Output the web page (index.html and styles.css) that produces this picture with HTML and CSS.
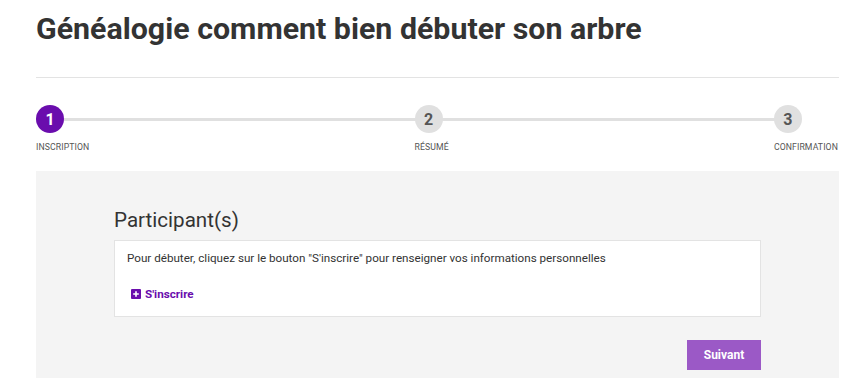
FILE: index.html
```html
<!DOCTYPE html>
<html lang="fr">
<head>
    <meta charset="UTF-8">
    <title>Généalogie comment bien débuter son arbre</title>
    <link rel="stylesheet" href="styles.css">
</head>
<body>
    <div class="page">
        <h1 class="title">Généalogie comment bien débuter son arbre</h1>

        <!-- Stepper -->
        <div class="stepper">
            <div class="step active">
                <span class="step-num">1</span>
                <span class="step-label">INSCRIPTION</span>
            </div>
            <div class="step">
                <span class="step-num">2</span>
                <span class="step-label">RÉSUMÉ</span>
            </div>
            <div class="step">
                <span class="step-num">3</span>
                <span class="step-label">CONFIRMATION</span>
            </div>
        </div>

        <!-- Participants -->
        <div class="panel">
            <div class="panel-inner">
                <h2 class="panel-title">Participant(s)</h2>
                <div class="card">
                    <p>Pour débuter, cliquez sur le bouton "S'inscrire" pour renseigner vos informations personnelles</p>
                    <a href="#" class="add-link">
                        <svg width="10" height="10" viewBox="0 0 10 10"><rect width="10" height="10" rx="1" fill="#6a0dad"/><path d="M5 2.2v5.6M2.2 5h5.6" stroke="#fff" stroke-width="1.6"/></svg>
                        S'inscrire
                    </a>
                </div>
                <div class="actions">
                    <button class="button">Suivant</button>
                </div>
            </div>
        </div>
    </div>
</body>
</html>
```

FILE: styles.css
```css
* {
    margin: 0;
    padding: 0;
    box-sizing: border-box;
}

body {
    font-family: Roboto, 'Liberation Sans', sans-serif;
    color: #333;
    background: #fff;
    overflow: hidden;
}

.page {
    padding: 0 21px 0 36px;
}

.title {
    font-size: 30.35px;
    font-weight: 700;
    line-height: 36px;
    padding-top: 11px;
    padding-bottom: 30px;
    border-bottom: 1px solid #e3e3e3;
    color: #333;
}

.stepper {
    position: relative;
    display: flex;
    justify-content: space-between;
    margin-top: 27px;
    margin-right: 1px;
}

.stepper::before {
    content: "";
    position: absolute;
    top: 13px;
    left: 14px;
    right: 50px;
    height: 3px;
    background-color: #e0e0e0;
}

.step {
    position: relative;
    display: flex;
    flex-direction: column;
    align-items: flex-start;
}

.step-num {
    width: 28px;
    height: 28px;
    border-radius: 50%;
    background-color: #e0e0e0;
    color: #555;
    font-size: 16px;
    font-weight: 700;
    display: flex;
    justify-content: center;
    align-items: center;
}

.step.active .step-num {
    background-color: #6a0dad;
    color: #fff;
}

.step-label {
    margin-top: 9px;
    font-size: 8.7px;
    color: #555;
    letter-spacing: 0.1px;
}

.panel {
    margin-top: 19px;
    background-color: #f4f4f4;
    height: 210px;
}

.panel-inner {
    padding: 37px 78px 0 78px;
}

.panel-title {
    font-size: 20.6px;
    font-weight: 400;
    line-height: 24px;
    color: #333;
    margin-bottom: 8px;
}

.card {
    background-color: #fff;
    border: 1px solid #e3e3e3;
    padding: 9px 12px 13px 12px;
}

.card p {
    font-size: 11.65px;
    line-height: 16px;
    color: #333;
}

.add-link {
    display: inline-flex;
    align-items: center;
    gap: 4px;
    margin-top: 21px;
    margin-left: 4px;
    font-size: 11.7px;
    font-weight: 700;
    color: #6a0dad;
    text-decoration: none;
}

.actions {
    display: flex;
    justify-content: flex-end;
    margin-top: 23px;
}

.button {
    width: 74px;
    height: 30px;
    border: none;
    background-color: #9b59c6;
    color: #fff;
    font-family: Roboto, sans-serif;
    font-size: 12px;
    font-weight: 700;
    cursor: pointer;
}
```
